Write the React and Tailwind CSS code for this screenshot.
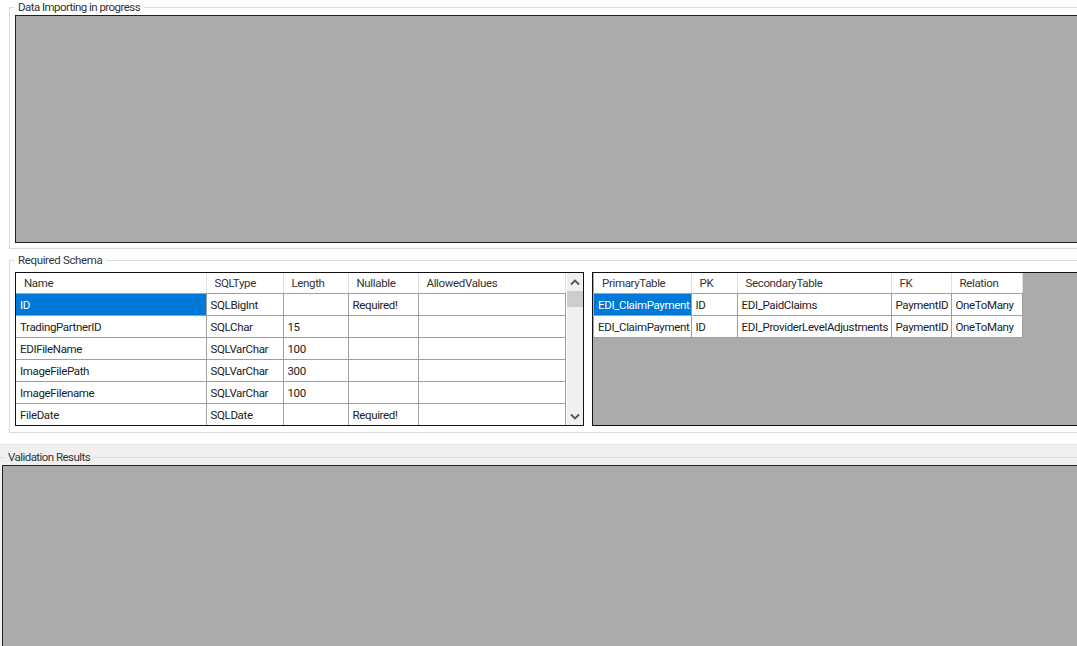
import React from "react";

const leftCols = [190, 77, 65, 70, 147];
const leftHeads = ["Name", "SQLType", "Length", "Nullable", "AllowedValues"];
const leftRows = [
  ["ID", "SQLBigInt", "", "Required!", ""],
  ["TradingPartnerID", "SQLChar", "15", "", ""],
  ["EDIFileName", "SQLVarChar", "100", "", ""],
  ["ImageFilePath", "SQLVarChar", "300", "", ""],
  ["ImageFilename", "SQLVarChar", "100", "", ""],
  ["FileDate", "SQLDate", "", "Required!", ""],
];
const rightCols = [97, 46, 154, 60, 71];
const rightHeads = ["PrimaryTable", "PK", "SecondaryTable", "FK", "Relation"];
const rightRows = [
  ["EDI_ClaimPayment", "ID", "EDI_PaidClaims", "PaymentID", "OneToMany"],
  ["EDI_ClaimPayment", "ID", "EDI_ProviderLevelAdjustments", "PaymentID", "OneToMany"],
];

function Grid({ cols, heads, rows }) {
  const total = cols.reduce((a, b) => a + b, 0);
  return (
    <table className="table-fixed border-collapse bg-white shrink-0" style={{ width: total }}>
      <colgroup>
        {cols.map((w, i) => (
          <col key={i} style={{ width: w }} />
        ))}
      </colgroup>
      <thead>
        <tr className="h-[20px]">
          {heads.map((h) => (
            <th key={h} className="border-r border-r-[#dfdfdf] border-b border-b-[#a0a0a0] pl-[8px] pt-[1px] text-left font-normal text-[#333] whitespace-nowrap overflow-hidden">
              {h}
            </th>
          ))}
        </tr>
      </thead>
      <tbody>
        {rows.map((r, ri) => (
          <tr key={ri} className="h-[22px]">
            {r.map((c, ci) => (
              <td
                key={ci}
                className={
                  "border-r border-b border-[#a0a0a0] pl-[4px] pt-[1px] whitespace-nowrap overflow-hidden " +
                  (ri === 0 && ci === 0 ? "bg-[#0078d7] text-white" : "text-[#222]")
                }
              >
                {c}
              </td>
            ))}
          </tr>
        ))}
      </tbody>
    </table>
  );
}

function Chevron({ up }) {
  return (
    <svg width="10" height="7" viewBox="0 0 10 7" className="text-[#555]">
      <path d={up ? "M1 5.5 L5 1.5 L9 5.5" : "M1 1.5 L5 5.5 L9 1.5"} fill="none" stroke="currentColor" strokeWidth="1.8" />
    </svg>
  );
}

export default function App() {
  return (
    <div className="w-[1077px] h-[646px] overflow-hidden bg-white flex flex-col text-[11.5px] leading-[14px] text-[#333] font-['Roboto','Noto_Sans',sans-serif] tracking-[-0.35px]">
      <fieldset className="ml-[9px] h-[249px] shrink-0 border border-r-0 border-[#dcdcdc] pl-[5px] pt-[1px] min-w-0">
        <legend className="ml-[-1px] px-[4px] pt-[1px] h-[14px] leading-[13px] tracking-[-0.55px]">Data Importing in progress</legend>
        <div className="h-[228px] bg-[#ababab] border border-r-0 border-[#222]" />
      </fieldset>

      <fieldset className="mt-[4px] ml-[9px] h-[180px] shrink-0 border border-r-0 border-[#dcdcdc] pl-[5px] pt-[5px] min-w-0">
        <legend className="ml-[-1px] px-[4px] pt-[1px] h-[14px] leading-[13px]">Required Schema</legend>
        <div className="flex gap-2">
          <div className="w-[569px] h-[154px] shrink-0 border border-[#111] flex overflow-hidden bg-white">
            <Grid cols={leftCols} heads={leftHeads} rows={leftRows} />
            <div className="w-[17px] ml-px shrink-0 bg-[#f0f0f0] flex flex-col items-center">
              <div className="h-[18px] flex items-center justify-center"><Chevron up /></div>
              <div className="w-full h-[16px] bg-[#cdcdcd]" />
              <div className="flex-1" />
              <div className="h-[18px] flex items-center justify-center"><Chevron /></div>
            </div>
          </div>
          <div className="flex-1 h-[154px] border border-r-0 border-[#111] bg-[#ababab] pl-px overflow-hidden">
            <Grid cols={rightCols} heads={rightHeads} rows={rightRows} />
          </div>
        </div>
      </fieldset>

      <div className="mt-[11px] flex-1 min-h-0 bg-[#f0f0f0] border-t border-[#e4e4e4] pt-[5px]">
        <fieldset className="h-full border-t border-[#dcdcdc] pl-[2px] pt-[1px] min-w-0">
          <legend className="ml-[3px] px-[3px] pt-[1px] h-[14px] leading-[13px] tracking-[-0.55px]">Validation Results</legend>
          <div className="h-[200px] bg-[#ababab] border border-r-0 border-[#222]" />
        </fieldset>
      </div>
    </div>
  );
}
